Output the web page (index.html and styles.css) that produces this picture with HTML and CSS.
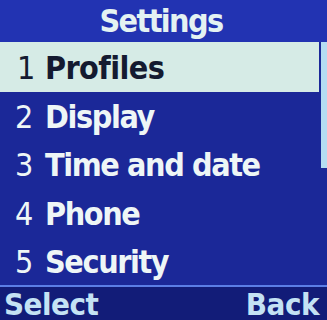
FILE: index.html
```html
<!DOCTYPE html>
<html>
<head>
<meta charset="utf-8">
<link rel="stylesheet" href="styles.css">
</head>
<body>
<div class="screen">
  <div class="title">Settings</div>
  <div class="main">
    <ul class="menu">
      <li class="item selected"><span class="num">1</span><span class="label">Profiles</span></li>
      <li class="item"><span class="num">2</span><span class="label">Display</span></li>
      <li class="item"><span class="num">3</span><span class="label">Time and date</span></li>
      <li class="item"><span class="num">4</span><span class="label">Phone</span></li>
      <li class="item"><span class="num">5</span><span class="label">Security</span></li>
    </ul>
    <div class="scroll"><div class="thumb"></div></div>
  </div>
  <div class="softkeys">
    <span class="key">Select</span>
    <span class="key">Back</span>
  </div>
</div>
</body>
</html>
```

FILE: styles.css
```css
* { box-sizing: border-box; margin: 0; padding: 0; }
html, body { width: 327px; height: 320px; overflow: hidden; background: #1a2696; }
body { font-family: "DejaVu Sans Condensed", "DejaVu Sans", sans-serif; font-weight: bold; }
.screen { width: 327px; height: 320px; display: flex; flex-direction: column; background: #1b2898; }
.title {
  height: 42px;
  background: #2233b2;
  color: #e4f2f2;
  font-size: 32px;
  line-height: 42px;
  text-align: center;
  letter-spacing: -1.6px;
  padding-right: 5px;
}
.main { display: flex; height: 243px; }
.menu { list-style: none; flex: 1; display: flex; flex-direction: column; }
.item {
  height: 48.6px;
  display: flex;
  align-items: center;
  padding-top: 2px;
  color: #eef6f6;
  font-size: 32px;
  padding-left: 15px;
  letter-spacing: -1.4px;
}
.item.selected { height: 50px; background: #d6ebe6; color: #141a30; margin-right: 2px; padding-left: 17px; }
.item.selected .num { width: 28px; }
.item.selected .label { font-weight: 600; letter-spacing: -0.6px; }
.num { width: 30px; font-weight: normal; }
.scroll { width: 6px; background: #1b2898; }
.thumb { height: 126px; background: #b4dcf2; }
.softkeys {
  height: 35px;
  border-top: 2px solid #5b7ee6;
  background: #121c78;
  display: flex;
  justify-content: space-between;
  align-items: center;
  padding: 0 8px 0 4px;
  color: #c4e2f4;
  font-size: 31px;
  letter-spacing: -0.5px;
}
```
